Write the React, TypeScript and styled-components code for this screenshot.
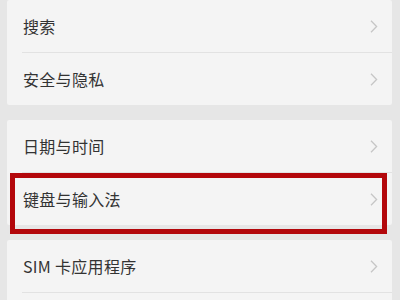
import React from "react";
import styled, { createGlobalStyle } from "styled-components";

const Global = createGlobalStyle`
  html, body { margin: 0; padding: 0; background: #e6e6e6; }
  body { font-family: "Noto Sans CJK SC", "Noto Sans", sans-serif; }
`;

const Page = styled.div`
  width: 400px;
  height: 300px;
  overflow: hidden;
  background: #e6e6e6;
  padding: 0 8px 0 7px;
  box-sizing: border-box;
  display: flex;
  flex-direction: column;
  gap: 15px;
`;

const Card = styled.div`
  background: #f4f4f4;
  border-radius: 2px;
  display: flex;
  flex-direction: column;
  flex-shrink: 0;
`;

const Row = styled.div`
  position: relative;
  height: 52px;
  display: flex;
  align-items: center;
  justify-content: space-between;
  padding: 0 14px 0 16px;
  box-sizing: border-box;
`;

const Label = styled.span`
  font-size: 16px;
  color: #333333;
  letter-spacing: 0.3px;
`;

const Divider = styled.div`
  height: 1px;
  margin-left: 15px;
  background: #e2e2e2;
`;

const Highlight = styled.div`
  position: absolute;
  left: 3px;
  right: 5px;
  top: 0;
  bottom: -9px;
  border: 5px solid #b3070b;
  pointer-events: none;
`;

const Chevron = () => (
  <svg width="8" height="13" viewBox="0 0 8 13">
    <path d="M1 0.8 L6.6 6.5 L1 12.2" fill="none" stroke="#c6c6c6" strokeWidth="1.3" />
  </svg>
);

type Item = { label: string; highlight?: boolean };

const groups: Item[][] = [
  [{ label: "搜索" }, { label: "安全与隐私" }],
  [{ label: "日期与时间" }, { label: "键盘与输入法", highlight: true }],
  [{ label: "SIM 卡应用程序" }, { label: "" }],
];

export default function App() {
  return (
    <>
      <Global />
      <Page>
        {groups.map((g, gi) => (
          <Card key={gi}>
            {g.map((it, i) => (
              <React.Fragment key={i}>
                {i > 0 && <Divider />}
                <Row>
                  <Label>{it.label}</Label>
                  <Chevron />
                  {it.highlight && <Highlight />}
                </Row>
              </React.Fragment>
            ))}
          </Card>
        ))}
      </Page>
    </>
  );
}
